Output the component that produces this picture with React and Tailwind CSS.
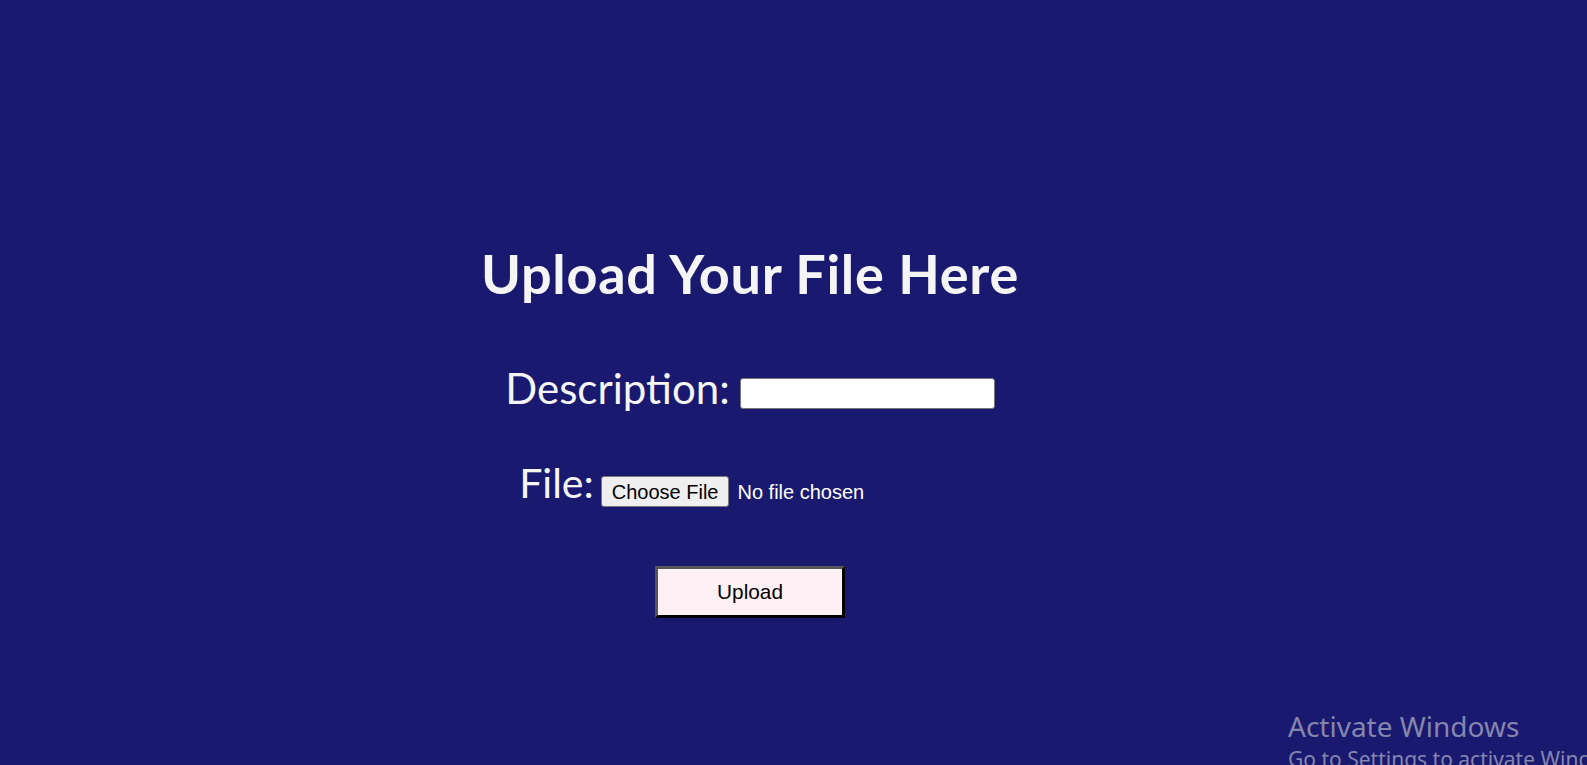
import React from 'react';

export default function App() {
  return (
    <div className="relative min-h-screen h-[765px] overflow-hidden bg-[#191970]">
      <div className="flex flex-col items-center pr-[87px] pt-[244px]">
        {/* TITLE */}
        <h1 className="text-[54px] font-bold leading-[60px] tracking-[0.7px] text-[#f5f5f5] font-['Lato',sans-serif]">
          Upload Your File Here
        </h1>

        {/* DESCRIPTION */}
        <div className="mt-[59px] flex items-end">
          <label className="text-[42px] leading-[50px] text-[#f5f5f5] font-['Lato',sans-serif]">
            Description:
          </label>
          <input
            type="text"
            className="ml-[10px] mb-[4px] h-[31px] w-[255px] rounded-[3px] border border-[#767676] bg-white px-1 text-[16px] text-black outline-none"
          />
        </div>

        {/* FILE */}
        <div className="mt-[45px] flex items-end">
          <label className="text-[41px] leading-[50px] text-[#f5f5f5] font-['Lato',sans-serif]">
            File:
          </label>
          <input
            type="file"
            className="ml-[7px] mb-[1px] w-[380px] text-[20px] text-white font-['Liberation_Sans',Arial,sans-serif] file:mr-[8px] file:h-[31px] file:rounded-[3px] file:border file:border-solid file:border-[#767676] file:bg-[#efefef] file:px-[10px] file:text-black file:font-['Liberation_Sans',Arial,sans-serif]"
          />
        </div>

        {/* SUBMIT */}
        <button className="mt-[58px] h-[52px] w-[190px] border-[3px] border-t-[#555555] border-l-[#555555] border-b-black border-r-black bg-[#fff0f5] text-[20.8px] text-black font-['Liberation_Sans',Arial,sans-serif]">
          Upload
        </button>
      </div>

      {/* Windows watermark */}
      <div className="absolute left-[1288px] top-[707px] whitespace-nowrap text-[#8586ad] font-['Noto_Sans',sans-serif]">
        <div className="text-[28px] leading-[38px]">Activate Windows</div>
        <div className="text-[21px] leading-[28px]">Go to Settings to activate Windows.</div>
      </div>
    </div>
  );
}
